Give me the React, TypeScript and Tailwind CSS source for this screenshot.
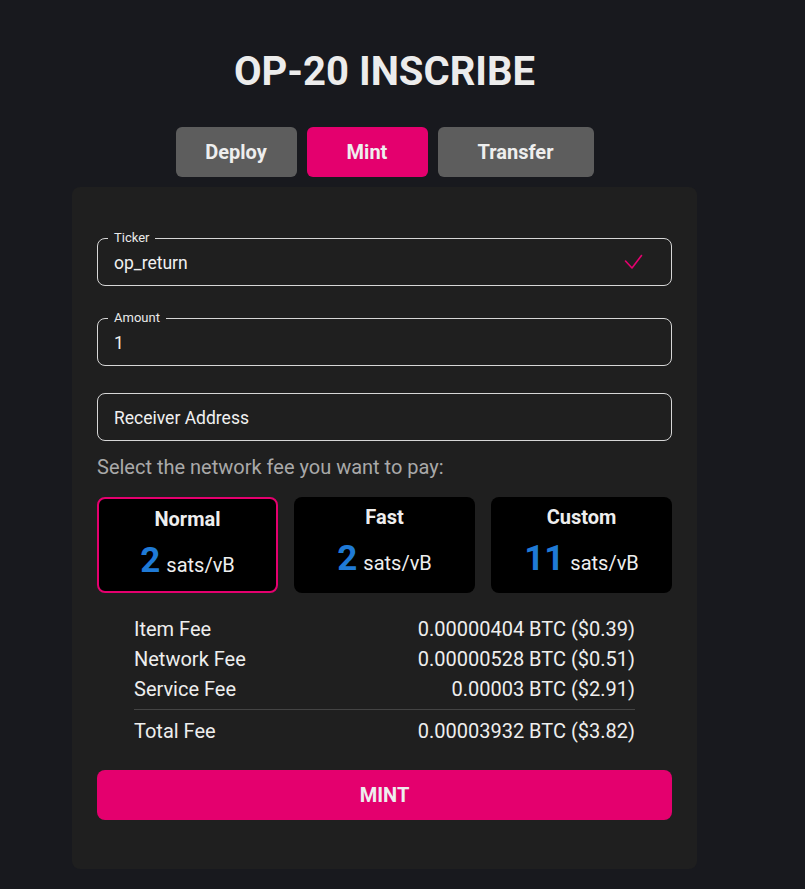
const fees = [
  { label: 'Item Fee', value: '0.00000404 BTC ($0.39)' },
  { label: 'Network Fee', value: '0.00000528 BTC ($0.51)' },
  { label: 'Service Fee', value: '0.00003 BTC ($2.91)' },
]

const speeds = [
  { name: 'Normal', rate: '2', active: true },
  { name: 'Fast', rate: '2', active: false },
  { name: 'Custom', rate: '11', active: false },
]

function OutlinedField({ label, value, checked }: { label?: string; value: string; checked?: boolean }) {
  return (
    <div className="relative flex h-12 items-center rounded-lg border border-[#d6d6d6] pl-4 pr-7">
      {label ? (
        <span className="absolute -top-[10px] left-[10px] bg-[#1f1f1f] px-[6px] text-[13px] leading-[18px] text-[#eaeaea]">
          {label}
        </span>
      ) : null}
      <span className="flex-1 pt-0.5 text-[17.5px] text-[#f0f0f0]">{value}</span>
      {checked ? (
        <svg width="19" height="17" viewBox="0 0 19 17" fill="none" className="text-[#e4006e]">
          <polyline points="1.5,7 8,14 17.5,1.5" stroke="currentColor" strokeWidth="1.6" strokeLinecap="round" strokeLinejoin="round" />
        </svg>
      ) : null}
    </div>
  )
}

export default function App() {
  return (
    <div className="min-h-screen bg-[#18191e] font-['Roboto',sans-serif] text-[#eeeeee]">
      <div className="ml-[72px] flex w-[625px] flex-col items-center pt-[48px] pb-5">
        <h1 className="text-[40px] font-bold leading-[48px] text-[#ececec]">OP-20 INSCRIBE</h1>

        <div className="mt-[31px] flex gap-[10px]">
          <button type="button" className="h-[50px] w-[121px] rounded-md bg-[#5d5d5d] text-xl font-bold text-[#eeeeee]">
            Deploy
          </button>
          <button type="button" className="h-[50px] w-[121px] rounded-md bg-[#e4006e] text-xl font-bold text-[#eeeeee]">
            Mint
          </button>
          <button type="button" className="h-[50px] w-[156px] rounded-md bg-[#5d5d5d] text-xl font-bold text-[#eeeeee]">
            Transfer
          </button>
        </div>

        <div className="mt-[10px] w-full rounded-lg bg-[#1f1f1f] px-[25px] pt-[51px] pb-[49px]">
          <div className="flex flex-col gap-8">
            <OutlinedField label="Ticker" value="op_return" checked />
            <OutlinedField label="Amount" value="1" />
          </div>
          <div className="mt-[27px]">
            <OutlinedField value="Receiver Address" />
          </div>

          <p className="mt-[12px] text-xl leading-7 text-[#a9a9a9]">Select the network fee you want to pay:</p>

          <div className="mt-4 grid grid-cols-3 gap-4">
            {speeds.map((s) => (
              <div
                key={s.name}
                className={`flex h-24 flex-col items-center rounded-lg bg-black ${
                  s.active ? 'border-2 border-[#e4006e] pt-[6px]' : 'pt-[6px]'
                }`}
              >
                <span className="text-xl font-bold leading-7 text-[#eeeeee]">{s.name}</span>
                <span className="mt-[8px] flex items-baseline gap-[6px]">
                  <span className="text-[35px] font-bold leading-10 text-[#1f7ad6]">{s.rate}</span>
                  <span className="text-xl text-[#eeeeee]">sats/vB</span>
                </span>
              </div>
            ))}
          </div>

          <div className="mx-[37px] mt-[21px] text-xl leading-[30px] text-[#eeeeee]">
            {fees.map((f) => (
              <div key={f.label} className="flex justify-between">
                <span>{f.label}</span>
                <span>{f.value}</span>
              </div>
            ))}
            <div className="mt-[5px] mb-[6px] border-t border-[#444444]" />
            <div className="flex justify-between">
              <span>Total Fee</span>
              <span>0.00003932 BTC ($3.82)</span>
            </div>
          </div>

          <button
            type="button"
            className="mt-[24px] h-[50px] w-full rounded-lg bg-[#e4006e] text-xl font-bold text-[#eeeeee]"
          >
            MINT
          </button>
        </div>
      </div>
    </div>
  )
}
